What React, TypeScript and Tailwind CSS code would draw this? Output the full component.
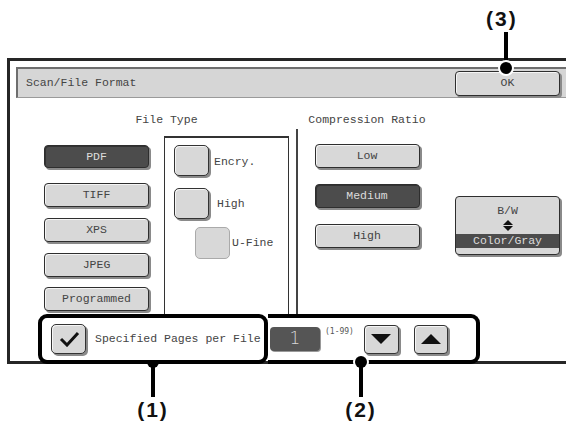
import clsx from 'clsx';

function Btn({
  label,
  dark,
  className,
}: {
  label: string;
  dark?: boolean;
  className?: string;
}) {
  return (
    <div
      className={clsx(
        'flex w-[105px] items-center justify-center rounded-[4px] border border-[#2e2e2e] leading-none',
        dark
          ? 'bg-[#4c4c4c] text-[#dcdcdc] shadow-[inset_1px_1px_0_#333,2px_2px_0_#8a8a8a]'
          : 'bg-[#d8d8d8] text-[#444] shadow-[inset_1px_1px_0_#f5f5f5,2px_2px_0_#8a8a8a]',
        className,
      )}
    >
      {label}
    </div>
  );
}

function Box({ faded, className }: { faded?: boolean; className?: string }) {
  return (
    <div
      className={clsx(
        'rounded-[5px] bg-[#d8d8d8]',
        faded
          ? 'border border-[#aaa]'
          : 'border border-[#333] shadow-[inset_1px_1px_0_#f5f5f5,2px_2px_0_#8a8a8a]',
        className,
      )}
    />
  );
}

function Callout({ label, x, top, len }: { label: string; x: number; top: number; len: number }) {
  // annotation: dot + stem + label, centred on x
  return (
    <div
      className="absolute flex w-[40px] flex-col items-center"
      style={{ left: x - 20, top }}
    >
      <div className="h-[12px] w-[12px] rounded-full bg-black ring-2 ring-white" />
      <div className="-mt-[2px] w-[4px] bg-black" style={{ height: len }} />
      <div className="mt-[3px] font-['Liberation_Sans',Arial,sans-serif] text-[21px] font-bold leading-[20px] tracking-[2px] text-[#111]">
        {label}
      </div>
    </div>
  );
}

export default function App() {
  return (
    <div className="relative h-[425px] w-[566px] overflow-hidden bg-white font-['Liberation_Mono','Courier_New',monospace] text-[11.5px] text-[#444]">
      <div className="ml-[7px] mt-[58px] flex h-[306px] w-[580px] flex-col border-y-[3px] border-l-[3px] border-[#262626]">
        {/* title bar */}
        <div className="ml-[6px] mt-[6px] flex h-[31px] w-[554px] shrink-0 items-center border-b border-l-2 border-t-2 border-b-[#9a9a9a] border-l-[#6e6e6e] border-t-[#6e6e6e] bg-[#d6d6d6] pl-[8px]">
          <span className="leading-none">Scan/File Format</span>
          <Btn label="OK" className="ml-auto mr-[10px] h-[25px]" />
        </div>

        {/* body */}
        <div className="flex h-[216px] shrink-0">
          <div className="ml-[34px] flex w-[245px] flex-col">
            <div className="mt-[15px] text-center leading-[14px]">File Type</div>
            <div className="mt-[9px] flex">
              <div className="mt-[9px] flex w-[105px] flex-col">
                <Btn label="PDF" dark className="h-[23px]" />
                <Btn label="TIFF" className="mt-[15px] h-[24px]" />
                <Btn label="XPS" className="mt-[11px] h-[24px]" />
                <Btn label="JPEG" className="mt-[11px] h-[24px]" />
                <Btn label="Programmed" className="mt-[10px] h-[24px]" />
              </div>
              <div className="ml-[15px] h-[178px] w-[125px] border-x border-t-2 border-[#333]">
                <div className="ml-[9px] mt-[7px] flex items-center">
                  <Box className="h-[31px] w-[35px]" />
                  <span className="ml-[5px] mt-[2px]">Encry.</span>
                </div>
                <div className="ml-[9px] mt-[12px] flex items-center">
                  <Box className="h-[31px] w-[35px]" />
                  <span className="ml-[8px]">High</span>
                </div>
                <div className="ml-[30px] mt-[8px] flex items-center">
                  <Box faded className="h-[32px] w-[35px]" />
                  <span className="ml-[2px]">U-Fine</span>
                </div>
              </div>
            </div>
          </div>

          <div className="ml-[7px] mt-[31px] h-[185px] w-[2px] bg-[#444]" />

          <div className="ml-[4px] flex w-[130px] flex-col items-center">
            <div className="mt-[15px] whitespace-nowrap leading-[14px]">Compression Ratio</div>
            <Btn label="Low" className="mt-[17px] h-[24px]" />
            <Btn label="Medium" dark className="mt-[16px] h-[24px]" />
            <Btn label="High" className="mt-[16px] h-[24px]" />
          </div>

          <div className="ml-[23px] mt-[98px] flex h-[59px] w-[105px] flex-col items-center overflow-hidden rounded-[4px] border border-[#2e2e2e] bg-[#d8d8d8] shadow-[2px_2px_0_#8a8a8a]">
            <span className="mt-[7px] leading-[13px]">B/W</span>
            <svg width="12" height="11" viewBox="0 0 12 11" className="mt-[3px]">
              <polygon points="1,5 6,0 11,5" fill="#111" />
              <polygon points="1,6 11,6 6,11" fill="#111" />
            </svg>
            <div className="mt-[3px] flex h-[14px] w-full items-center justify-center bg-[#4c4c4c] text-[#dcdcdc]">
              Color/Gray
            </div>
          </div>
        </div>

        {/* bottom row */}
        <div className="relative flex h-[47px] shrink-0">
          <div className="relative z-10 ml-[28px] flex h-[50px] w-[230px] items-center rounded-[9px] border-4 border-black bg-white">
            <div className="ml-[9px] flex h-[30px] w-[35px] items-center justify-center rounded-[5px] border border-[#333] bg-[#d8d8d8] shadow-[inset_1px_1px_0_#f5f5f5,2px_2px_0_#8a8a8a]">
              <svg width="22" height="16" viewBox="0 0 22 16">
                <path d="M3 8 L9 14 L20 2" fill="none" stroke="#111" strokeWidth="3" />
              </svg>
            </div>
            <span className="ml-[9px] whitespace-nowrap">Specified Pages per File</span>
          </div>
          <div className="flex h-[50px] w-[212px] items-center rounded-r-[9px] border-y-4 border-r-4 border-black bg-white">
            <div className="ml-[2px] flex h-[24px] w-[50px] items-center justify-center rounded-[4px] bg-[#555] font-['DejaVu_Sans',sans-serif] text-[17px] font-light text-[#d8d8d8] shadow-[1px_1px_0_#999]">
              1
            </div>
            <span className="mb-[14px] ml-[5px] font-['DejaVu_Sans_Mono',monospace] text-[8px] text-[#555]">(1-99)</span>
            <div className="ml-[10px] flex h-[29px] w-[35px] items-center justify-center rounded-[4px] border border-[#333] bg-[#d8d8d8] shadow-[inset_1px_1px_0_#f5f5f5,2px_2px_0_#8a8a8a]">
              <svg width="20" height="10" viewBox="0 0 20 10">
                <polygon points="0,0 20,0 10,10" fill="#111" />
              </svg>
            </div>
            <div className="ml-[15px] flex h-[29px] w-[34px] items-center justify-center rounded-[4px] border border-[#333] bg-[#d8d8d8] shadow-[inset_1px_1px_0_#f5f5f5,2px_2px_0_#8a8a8a]">
              <svg width="20" height="10" viewBox="0 0 20 10">
                <polygon points="0,10 20,10 10,0" fill="#111" />
              </svg>
            </div>
          </div>
        </div>
      </div>

      {/* callout (3) */}
      <div className="absolute left-[486px] top-[9px] font-['Liberation_Sans',Arial,sans-serif] text-[21px] font-bold leading-[20px] tracking-[2px] text-[#111]">
        (3)
      </div>
      <div className="absolute left-[504px] top-[32px] h-[34px] w-[4px] bg-black" />
      <div className="absolute left-[500px] top-[62px] h-[12px] w-[12px] rounded-full bg-black ring-2 ring-white" />

      <Callout label="(1)" x={153} top={356} len={31} />
      <Callout label="(2)" x={361} top={356} len={31} />
    </div>
  );
}
